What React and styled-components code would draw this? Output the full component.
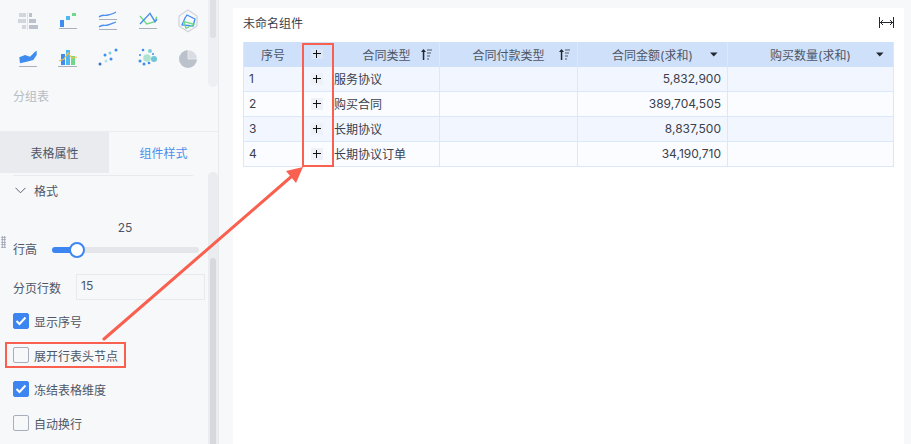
import React from "react";
import styled, { createGlobalStyle } from "styled-components";

const GlobalStyle = createGlobalStyle`
    html, body {
        margin: 0;
        padding: 0;
        height: 100%;
        overflow: hidden;
        background: #F7F8FA;
    }
    * {
        box-sizing: border-box;
    }
`;

const columns = [
    { title: "序号", width: 59 },
    { title: "+", width: 31, expand: true },
    { title: "合同类型", width: 106, icon: "sort" },
    { title: "合同付款类型", width: 138, icon: "sort" },
    { title: "合同金额(求和)", width: 150, icon: "caret" },
    { title: "购买数量(求和)", width: 166, icon: "caret" },
];

const rows = [
    { id: 1, tipo: "服务协议", valor: "5,832,900" },
    { id: 2, tipo: "购买合同", valor: "389,704,505" },
    { id: 3, tipo: "长期协议", valor: "8,837,500" },
    { id: 4, tipo: "长期协议订单", valor: "34,190,710" },
];

function ChartIcon({ name }) {
    const base = { width: 20, height: 20, viewBox: "0 0 20 20", style: { overflow: "visible" } };
    if (name === "bars") {
        return (
            <svg {...base}>
                <path fill="#D2D6DD" d="M1 1h7v4H1zM0 7h8v4H0zM4 13h4v4H4z" />
                <path fill="#DFE2E6" d="M9 0h1v18H9z" />
                <path fill="#BCC2CC" d="M11 1h3v4h-3zM11 7h7v4h-7zM11 13h9v4h-9z" />
            </svg>
        );
    }
    if (name === "steps") {
        return (
            <svg {...base}>
                <path fill="#3F8CF0" d="M2 8h4v7H2z" />
                <path fill="#4DB9EE" d="M8 4h4v4H8z" />
                <path fill="#6FD987" d="M14 1h4v3h-4z" />
                <path fill="#A9AFBB" d="M1 16h18v1H1z" />
            </svg>
        );
    }
    if (name === "lines") {
        return (
            <svg {...base} fill="none">
                <path stroke="#4A90EE" strokeWidth="1.3" d="M1 5c3-3 5-1 9-2s5-1 8-3" />
                <path stroke="#A9AFBB" d="M1 7.500h18" />
                <path stroke="#4A90EE" strokeWidth="1.3" d="M1 15c3-3 5-1 9-2s5-2 8-3" />
                <path stroke="#A9AFBB" d="M1 17.500h18" />
            </svg>
        );
    }
    if (name === "cross") {
        return (
            <svg {...base} fill="none">
                <path stroke="#6FD987" strokeWidth="1.4" d="M2 4l6.700 8 8.300-2.300 1.700-5" />
                <path stroke="#4A90EE" strokeWidth="1.4" d="M2 12L12 1.300l5 8.400 2-2.400" />
                <path stroke="#A9AFBB" d="M1 16.500h18" />
            </svg>
        );
    }
    if (name === "radar") {
        return (
            <svg {...base} fill="none">
                <path stroke="#CFD3DA" strokeWidth="1.200" d="M10-2l9 6v10l-9 5.700L1 14V4z" />
                <path stroke="#3F8CF0" strokeWidth="1.300" d="M9 3l8 4-2 7-11-1 3-7z" />
                <path stroke="#6FD987" strokeWidth="1.300" d="M6 9.700l10 2.600-8 4z" />
            </svg>
        );
    }
    if (name === "area") {
        return (
            <svg {...base}>
                <path fill="#3F8CF0" d="M1.300 9.300L7 7l5 1.700 5-5 1.700-1v4.300l-3.400 5-6.600 1.700-6.700 1.600z" />
                <path fill="#A9AFBB" d="M1 18h18v1H1z" />
            </svg>
        );
    }
    if (name === "combo") {
        return (
            <svg {...base} fill="none">
                <path fill="#3F8CF0" d="M3 6h4v11H3z" />
                <path fill="#4DB9EE" d="M8 2h4v15H8z" />
                <path fill="#6FD987" d="M13 8h4v9h-4z" />
                <path stroke="#F4C04E" strokeWidth="1.200" d="M1 13l5-2 4-6 4 5 5-1" />
                <path stroke="#A9AFBB" d="M0 18.500h19" />
            </svg>
        );
    }
    if (name === "scatter") {
        return (
            <svg {...base}>
                <circle cx="2" cy="16" r="1.500" fill="#3E6FC0" />
                <circle cx="7" cy="7" r="1.500" fill="#3F8CF0" />
                <circle cx="8" cy="13" r="1.500" fill="#B5E5DA" />
                <circle cx="12" cy="5" r="1.500" fill="#80CFDC" />
                <circle cx="13" cy="11" r="1.500" fill="#3F8CF0" />
                <circle cx="18" cy="2" r="1.500" fill="#3F8CF0" />
            </svg>
        );
    }
    if (name === "bubble") {
        return (
            <svg {...base}>
                <circle cx="9" cy="10" r="3.800" fill="#ADE3D3" />
                <circle cx="12" cy="3" r="2" fill="#80CFDC" />
                <circle cx="16" cy="11" r="3" fill="#6FC6D6" />
                <circle cx="5" cy="2" r="1.300" fill="#3F8CF0" />
                <circle cx="2" cy="7" r="1" fill="#3F8CF0" />
                <circle cx="2" cy="13" r="1.500" fill="#3F8CF0" />
                <circle cx="6" cy="16" r="1.500" fill="#3F8CF0" />
                <circle cx="11" cy="15" r="1.300" fill="#3F8CF0" />
                <circle cx="15" cy="6" r="1" fill="#3F8CF0" />
            </svg>
        );
    }
    return (
        <svg {...base}>
            <circle cx="10" cy="11" r="9" fill="#BCC2CC" />
            <path fill="#D9DCE2" stroke="#F7F8FA" strokeWidth=".6" d="M10 2a9 9 0 0 1 9 9h-9z" />
        </svg>
    );
}

function SortIcon() {
    return (
        <svg width="11" height="11" viewBox="0 0 11 11" fill="none">
            <path fill="#222831" d="M2.500 0L5 3H3.300v8H1.800V3H0z" />
            <path stroke="#4E5666" d="M6 1h5M6 4h4M6 7h3M6 10h2" />
        </svg>
    );
}

function CaretIcon() {
    return (
        <svg width="8" height="5" viewBox="0 0 8 5">
            <path fill="#222831" d="M0 .500h7.500L3.750 4.500z" />
        </svg>
    );
}

function PlusIcon() {
    return (
        <svg width="8" height="8" viewBox="0 0 8 8" fill="none">
            <path stroke="#111111" d="M0 3.500h8M3.500 0v8" />
        </svg>
    );
}

function CheckIcon() {
    return (
        <svg width="12" height="12" viewBox="0 0 12 12" fill="none">
            <path stroke="#FFFFFF" strokeWidth="2" d="M1.500 6l3 3 6-6.500" />
        </svg>
    );
}

function Option({ checked, highlight, children }) {
    return (
        <OptionRow>
            <CheckBox $checked={checked}>{checked && <CheckIcon />}</CheckBox>
            <span>{children}</span>
            {highlight && <Highlight />}
        </OptionRow>
    );
}

export default function App() {
    const chartIcons = ["bars", "steps", "lines", "cross", "radar", "area", "combo", "scatter", "bubble", "pie"];

    return (
        <Pagina>
            <GlobalStyle />
            <Sidebar>
                <TopPane>
                    <TopContent>
                        <IconGrid>
                            {chartIcons.map((name) => (
                                <IconCell key={name}>
                                    <ChartIcon name={name} />
                                </IconCell>
                            ))}
                        </IconGrid>
                        <GroupLabel>分组表</GroupLabel>
                    </TopContent>
                    <TopTrack>
                        <TopThumb />
                    </TopTrack>
                </TopPane>
                <Tabs>
                    <Tab>表格属性</Tab>
                    <Tab $active>组件样式</Tab>
                </Tabs>
                <BottomPane>
                    <Panel>
                        <SectionTitle>
                            <svg width="11" height="7" viewBox="0 0 11 7" fill="none">
                                <path stroke="#5A6273" d="M.5.800l5 5 5-5" />
                            </svg>
                            <span>格式</span>
                        </SectionTitle>
                        <SliderValue>25</SliderValue>
                        <SliderRow>
                            <DragDots />
                            <FieldLabel $raised>行高</FieldLabel>
                            <SliderTrack>
                                <SliderFill />
                                <SliderThumb />
                            </SliderTrack>
                        </SliderRow>
                        <InputRow>
                            <FieldLabel>分页行数</FieldLabel>
                            <NumberBox>15</NumberBox>
                        </InputRow>
                        <Options>
                            <Option checked>显示序号</Option>
                            <Option highlight>展开行表头节点</Option>
                            <Option checked>冻结表格维度</Option>
                            <Option>自动换行</Option>
                        </Options>
                    </Panel>
                    <BottomTrack>
                        <BottomThumb />
                    </BottomTrack>
                </BottomPane>
            </Sidebar>
            <Main>
                <Card>
                    <CardHeader>
                        <CardTitle>未命名组件</CardTitle>
                        <svg width="15" height="11" viewBox="0 0 15 11" fill="none">
                            <path stroke="#222831" d="M.5 0v11M14.500 0v11M1 5.500h13M4 3L1.500 5.500 4 8M11 3l2.500 2.500L11 8" />
                        </svg>
                    </CardHeader>
                    <Tabela>
                        <colgroup>
                            {columns.map((c) => (
                                <col key={c.title} width={c.width} />
                            ))}
                        </colgroup>
                        <thead>
                            <tr>
                                {columns.map((c) => (
                                    <Th key={c.title}>
                                        {c.expand ? (
                                            <ExpandButton $header><PlusIcon /></ExpandButton>
                                        ) : (
                                            <HeadInner>
                                                <span />
                                                <span>{c.title}</span>
                                                <HeadIcon $caret={c.icon === "caret"}>
                                                    {c.icon === "sort" && <SortIcon />}
                                                    {c.icon === "caret" && <CaretIcon />}
                                                </HeadIcon>
                                            </HeadInner>
                                        )}
                                    </Th>
                                ))}
                            </tr>
                        </thead>
                        <tbody>
                            {rows.map((r) => (
                                <Tr key={r.id}>
                                    <Td $pad="0 0 1px 5px">{r.id}</Td>
                                    <Td $center>
                                        <ExpandButton><PlusIcon /></ExpandButton>
                                    </Td>
                                    <Td $pad="0 0 1px 0">{r.tipo}</Td>
                                    <Td />
                                    <Td $right $pad="0 6px 1px 0">{r.valor}</Td>
                                    <Td />
                                </Tr>
                            ))}
                        </tbody>
                    </Tabela>
                    <ColumnMark />
                </Card>
            </Main>
            <Arrow width="911" height="444" viewBox="0 0 911 444" fill="none">
                <path stroke="#F9604F" strokeWidth="3" strokeLinecap="round" d="M104 339L292 176" />
                <path fill="#F9604F" d="M303 167L296 183L286 171z" />
            </Arrow>
        </Pagina>
    );
}

const Pagina = styled.main`
    position: relative;
    width: 911px;
    height: 444px;
    overflow: hidden;
    display: flex;
    background: #F7F8FA;
    font-family: "Inter", "Noto Sans CJK SC", sans-serif;
    font-size: 12px;
    color: #4E5666;
`;
const Sidebar = styled.aside`
    width: 219px;
    height: 444px;
    border-right: 1px solid #E8EAED;
    display: flex;
    flex-direction: column;
`;
const TopPane = styled.section`
    height: 132px;
    display: flex;
    justify-content: space-between;
    border-bottom: 1px solid #EBEDF0;
`;
const TopContent = styled.div`
    width: 208px;
    padding: 4px 0 0 8px;
`;
const IconGrid = styled.div`
    display: grid;
    grid-template-columns: repeat(5, 40px);
    grid-auto-rows: 36px;
`;
const IconCell = styled.div`
    display: flex;
    align-items: center;
    justify-content: center;
`;
const GroupLabel = styled.div`
    margin: 11px 0 0 5px;
    line-height: 20px;
    color: #B6BBC5;
`;
const TopTrack = styled.div`
    width: 10px;
    height: 87px;
    padding: 0 2px;
    background: #EEEFF3;
    border-radius: 0 0 5px 5px;
`;
const TopThumb = styled.div`
    height: 38px;
    background: #DEE0E5;
    border-radius: 0 0 3px 3px;
`;
const Tabs = styled.div`
    height: 41px;
    display: flex;
`;
const Tab = styled.div`
    width: 109px;
    display: flex;
    align-items: center;
    justify-content: center;
    font-size: 12px;
    background: ${(p) => (p.$active ? "#F7F8FA" : "#E9EBEE")};
    color: ${(p) => (p.$active ? "#4A90EE" : "#4E5666")};
`;
const BottomPane = styled.section`
    flex: 1;
    display: flex;
    justify-content: space-between;
    min-height: 0;
`;
const Panel = styled.div`
    width: 208px;
    padding: 2px 0 0 0;
`;
const SectionTitle = styled.div`
    margin-left: 13px;
    width: 180px;
    height: 31px;
    border-top: 1px solid #E8EAED;
    display: flex;
    align-items: center;
    gap: 8px;
    padding-left: 2px;
    padding-bottom: 1px;
`;
const SliderValue = styled.div`
    margin-top: 14px;
    text-align: center;
    width: 250px;
    line-height: 16px;
`;
const SliderRow = styled.div`
    position: relative;
    display: flex;
    align-items: center;
    height: 22px;
    margin-top: 3px;
    padding-left: 13px;
`;
const DragDots = styled.span`
    position: absolute;
    left: 1px;
    top: -3px;
    width: 5px;
    height: 12px;
    background: radial-gradient(circle, #8D94A3 0.8px, transparent 1px) 0 0 / 2.500px 2.500px;
`;
const FieldLabel = styled.span`
    flex: none;
    margin-bottom: ${(p) => (p.$raised ? "4px" : "0")};
`;
const SliderTrack = styled.div`
    position: relative;
    width: 147px;
    height: 6px;
    margin-left: 15px;
    border-radius: 3px;
    background: #E4E6EA;
`;
const SliderFill = styled.div`
    width: 25px;
    height: 6px;
    border-radius: 3px;
    background: #3D85F0;
`;
const SliderThumb = styled.div`
    position: absolute;
    left: 17px;
    top: -5px;
    width: 16px;
    height: 16px;
    border-radius: 50%;
    border: 2px solid #3D85F0;
    background: #FFFFFF;
`;
const InputRow = styled.div`
    display: flex;
    align-items: center;
    height: 26px;
    margin-top: 13px;
    padding-left: 13px;
`;
const NumberBox = styled.div`
    width: 129px;
    height: 26px;
    margin-left: 15px;
    padding-left: 4px;
    line-height: 22px;
    border: 1px solid #E8EAED;
    background: #F7F8FA;
`;
const Options = styled.div`
    margin-top: 4px;
    padding-left: 13px;
    display: flex;
    flex-direction: column;
`;
const OptionRow = styled.label`
    position: relative;
    height: 34px;
    display: flex;
    align-items: center;
    gap: 5px;
`;
const CheckBox = styled.span`
    width: 16px;
    height: 16px;
    border-radius: 2px;
    display: flex;
    align-items: center;
    justify-content: center;
    background: ${(p) => (p.$checked ? "#3D85F0" : "#F7F8FA")};
    border: 1px solid ${(p) => (p.$checked ? "#3D85F0" : "#A8AEBB")};
`;
const Highlight = styled.span`
    position: absolute;
    left: -8px;
    top: 4px;
    width: 121px;
    height: 26px;
    border: 2px solid #F9604F;
`;
const BottomTrack = styled.div`
    width: 10px;
    margin-top: -1px;
    padding: 86px 2px 0;
    background: #EBECF0;
    border-radius: 5px 5px 0 0;
`;
const BottomThumb = styled.div`
    height: 100%;
    background: #D6D8DD;
    border-radius: 3px 3px 0 0;
`;
const Main = styled.section`
    flex: 1;
    padding: 8px 7px 0 14px;
`;
const Card = styled.div`
    position: relative;
    height: 100%;
    background: #FFFFFF;
    padding: 0 10px;
`;
const CardHeader = styled.header`
    height: 34px;
    display: flex;
    align-items: center;
    justify-content: space-between;
    padding-bottom: 6px;
    color: #333A45;
`;
const CardTitle = styled.h1`
    margin: 0;
    font-size: 12px;
    font-weight: 400;
    color: #3A404C;
`;
const Tabela = styled.table`
    width: 650px;
    table-layout: fixed;
    border-collapse: separate;
    border-spacing: 0;
    color: #3A404C;
    border-left: 1px solid #DCE8FA;
`;
const Th = styled.th`
    height: 25px;
    padding: 0;
    font-weight: 400;
    background: #CFE0FA;
    border-right: 1px solid #DCE8FA;
    border-bottom: 1px solid #CFE0FA;
    text-align: center;
    color: #4E5666;
`;
const HeadInner = styled.div`
    display: grid;
    grid-template-columns: 1fr auto 1fr;
    align-items: center;
    padding: 0 7px;
`;
const HeadIcon = styled.span`
    justify-self: end;
    display: flex;
    align-items: center;
    margin-right: ${(p) => (p.$caret ? "2px" : "0")};
`;
const Tr = styled.tr`
    background: #FAFCFF;
    &:nth-child(odd) {
        background: #F2F7FF;
    }
`;
const Td = styled.td`
    height: 25px;
    padding: ${(p) => p.$pad || "0"};
    border-right: 1px solid #DCE8FA;
    border-bottom: 1px solid #DCE8FA;
    text-align: ${(p) => (p.$right ? "right" : p.$center ? "center" : "left")};
`;
const ExpandButton = styled.span`
    display: inline-flex;
    align-items: center;
    justify-content: center;
    vertical-align: middle;
    width: 12px;
    height: ${(p) => (p.$header ? "10px" : "12px")};
    margin: 0 2px 2px 0;
    background: ${(p) => (p.$header ? "#DCE7F8" : "#EEF2F8")};
`;
const ColumnMark = styled.span`
    position: absolute;
    left: 69px;
    top: 35px;
    width: 32px;
    height: 124px;
    border: 2px solid #F9604F;
`;
const Arrow = styled.svg`
    position: absolute;
    left: 0;
    top: 0;
    pointer-events: none;
`;
